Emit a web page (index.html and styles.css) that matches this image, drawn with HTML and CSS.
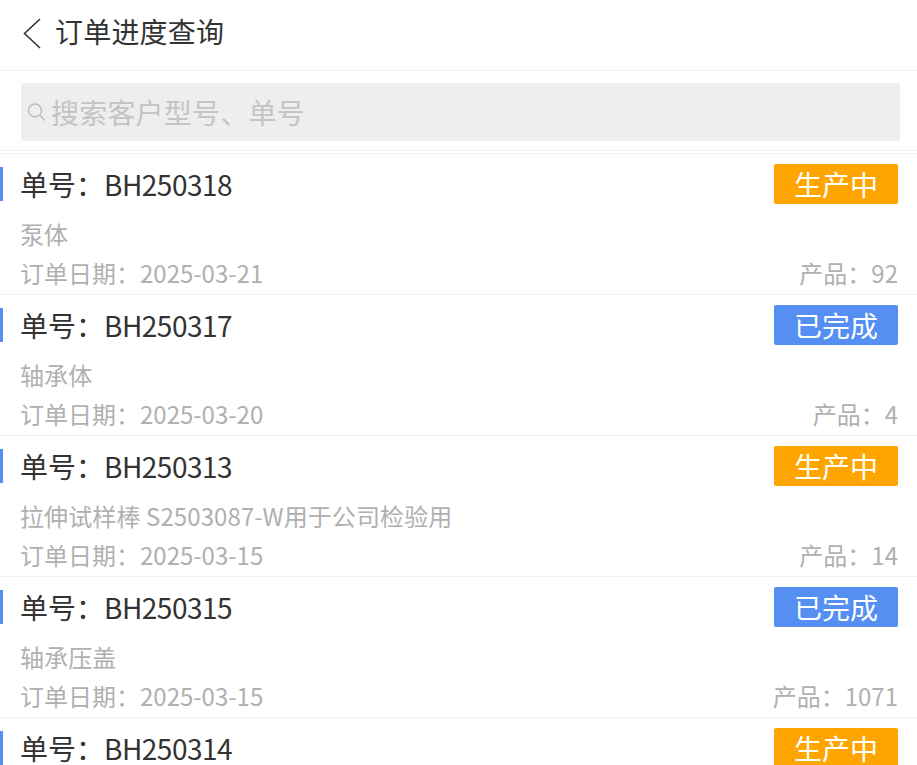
FILE: index.html
```html
<!doctype html>
<html lang="zh-CN">
  <head>
    <meta charset="UTF-8" />
    <meta name="viewport" content="width=device-width, initial-scale=1.0" />
    <title>订单进度查询</title>
    <link rel="stylesheet" href="styles.css">
  </head>
  <body>
    <div class="page">
      <div class="header">
        <svg class="back" width="20" height="32" viewBox="0 0 20 32"><path d="M18 2 L2.5 16.5 L18 31" fill="none" stroke="#333" stroke-width="1.6"/></svg>
        <h1>订单进度查询</h1>
      </div>

      <div class="search-wrap">
        <div class="search">
          <svg class="search-icon" width="20" height="20" viewBox="0 0 20 20"><circle cx="8" cy="8.5" r="6.5" fill="none" stroke="#bbb" stroke-width="1.4"/><path d="M12.8 13.3 L18 18.5" fill="none" stroke="#bbb" stroke-width="1.4"/></svg>
          <span>搜索客户型号、单号</span>
        </div>
      </div>

      <div class="list">
        <div class="order">
          <div class="order-top">
            <div class="order-no">单号：<span class="num">BH250318</span></div>
            <div class="badge badge-doing">生产中</div>
          </div>
          <div class="order-name">泵体</div>
          <div class="order-bottom">
            <span>订单日期：2025-03-21</span>
            <span>产品：92</span>
          </div>
        </div>
        <div class="order">
          <div class="order-top">
            <div class="order-no">单号：<span class="num">BH250317</span></div>
            <div class="badge badge-done">已完成</div>
          </div>
          <div class="order-name">轴承体</div>
          <div class="order-bottom">
            <span>订单日期：2025-03-20</span>
            <span>产品：4</span>
          </div>
        </div>
        <div class="order">
          <div class="order-top">
            <div class="order-no">单号：<span class="num">BH250313</span></div>
            <div class="badge badge-doing">生产中</div>
          </div>
          <div class="order-name">拉伸试样棒 S2503087-W用于公司检验用</div>
          <div class="order-bottom">
            <span>订单日期：2025-03-15</span>
            <span>产品：14</span>
          </div>
        </div>
        <div class="order">
          <div class="order-top">
            <div class="order-no">单号：<span class="num">BH250315</span></div>
            <div class="badge badge-done">已完成</div>
          </div>
          <div class="order-name">轴承压盖</div>
          <div class="order-bottom">
            <span>订单日期：2025-03-15</span>
            <span>产品：1071</span>
          </div>
        </div>
        <div class="order">
          <div class="order-top">
            <div class="order-no">单号：<span class="num">BH250314</span></div>
            <div class="badge badge-doing">生产中</div>
          </div>
        </div>
      </div>
    </div>
  </body>
</html>
```

FILE: styles.css
```css
html, body {
  height: 100%;
}
body {
  font-family: "Noto Sans CJK SC", "Noto Sans", sans-serif;
  background-color: white;
  margin: 0;
  padding: 0;
  overflow: hidden;
}
.page {
  height: 765px;
  overflow: hidden;
}
.header {
  display: flex;
  align-items: center;
  height: 66px;
  padding-bottom: 4px;
  padding-left: 22px;
  border-bottom: 1px solid #f2f2f2;
}
.back {
  margin-right: 13px;
}
.header h1 {
  margin: 0 0 4px;
  font-size: 28px;
  font-weight: 400;
  letter-spacing: 0.2px;
  color: #333;
}
.search-wrap {
  padding: 12px 17px 9px 21px;
  border-bottom: 1px solid #f2f2f2;
}
.search {
  display: flex;
  align-items: center;
  height: 58px;
  padding-left: 6px;
  background-color: #eee;
  border-radius: 2px;
  color: #c4c4c4;
  font-size: 28px;
  letter-spacing: 0.2px;
}
.search-icon {
  margin-right: 4px;
}
.list {
  margin-top: 2px;
  border-top: 1px solid #f2f2f2;
}
.order {
  height: 130px;
  padding: 10px 19px 0 20px;
  border-bottom: 1px solid #f2f2f2;
}
.order-top {
  display: flex;
  justify-content: space-between;
  align-items: center;
  height: 40px;
  position: relative;
}
.order-top::before {
  content: "";
  position: absolute;
  left: -20px;
  top: 3px;
  width: 3px;
  height: 34px;
  background-color: #558ff2;
}
.order-no {
  font-size: 28px;
  color: #333;
}
.num {
  letter-spacing: -0.5px;
}
.badge {
  width: 124px;
  height: 40px;
  line-height: 40px;
  text-align: center;
  font-size: 28px;
  color: white;
  border-radius: 2px;
}
.badge-doing {
  background-color: #ffa500;
}
.badge-done {
  background-color: #558ff2;
}
.order-name {
  margin-top: 12px;
  height: 36px;
  line-height: 36px;
  font-size: 24px;
  letter-spacing: 0.1px;
  color: #b0b0b0;
}
.order-bottom {
  display: flex;
  justify-content: space-between;
  margin-top: 3px;
  height: 36px;
  line-height: 36px;
  font-size: 24px;
  color: #b0b0b0;
}
```
